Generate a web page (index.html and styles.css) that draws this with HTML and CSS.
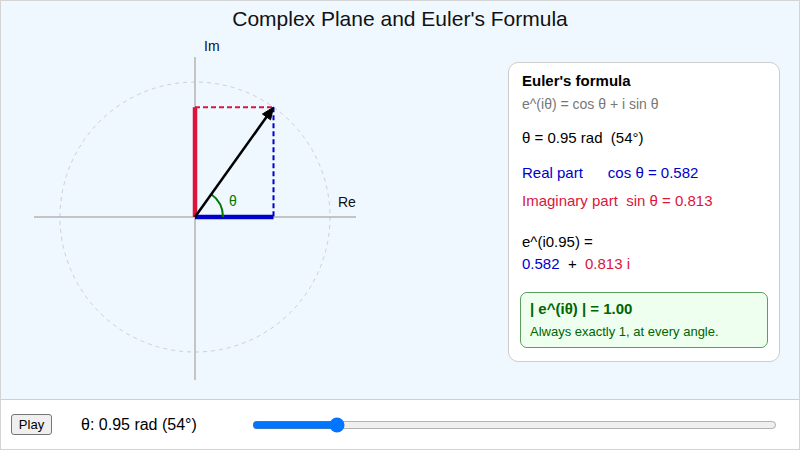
FILE: index.html
```html
<!DOCTYPE html>
<html lang="en">
<head>
<meta charset="utf-8">
<title>Complex Plane and Euler's Formula</title>
<link rel="stylesheet" href="styles.css">
</head>
<body>
<div class="app">
  <div class="stage">
    <h1 class="title">Complex Plane and Euler's Formula</h1>
    <div class="content">
      <svg class="plane" width="400" height="362" viewBox="0 0 400 362">
        <circle cx="194" cy="180" r="135" fill="none" stroke="#cfcfcf" stroke-width="1" stroke-dasharray="4 4"/>
        <line x1="33" y1="180" x2="355" y2="180" stroke="#b3b3b3" stroke-width="1.5"/>
        <line x1="194" y1="20" x2="194" y2="343" stroke="#b3b3b3" stroke-width="1.5"/>
        <text x="203" y="10" class="axis-label" dominant-baseline="middle">Im</text>
        <text x="337" y="166" class="axis-label" dominant-baseline="middle">Re</text>
        <line x1="194" y1="70.2" x2="272.5" y2="70.2" stroke="#dc143c" stroke-width="2" stroke-dasharray="5 3"/>
        <line x1="272.5" y1="70.2" x2="272.5" y2="180" stroke="#0000cc" stroke-width="2" stroke-dasharray="5 3"/>
        <line x1="194" y1="180" x2="194" y2="70.2" stroke="#dc143c" stroke-width="4.5"/>
        <line x1="194" y1="180" x2="272.5" y2="180" stroke="#0000cc" stroke-width="4.5"/>
        <path d="M222,180 A28,28 0 0 0 210.29,157.22" fill="none" stroke="#007700" stroke-width="2"/>
        <text x="232" y="165" class="theta-label" text-anchor="middle" dominant-baseline="middle">θ</text>
        <line x1="194" y1="180" x2="266" y2="79.3" stroke="#000" stroke-width="2.5"/>
        <polygon points="272.5,70.2 269.57,82.87 261.43,77.05" fill="#000" stroke="#000" stroke-width="1" stroke-linejoin="round"/>
      </svg>
      <div class="panel">
        <div class="p-title">Euler's formula</div>
        <div class="p-formula">e^(iθ) = cos θ + i sin θ</div>
        <div class="p-theta">θ = 0.95 rad  (54°)</div>
        <div class="p-real">Real part      cos θ = 0.582</div>
        <div class="p-imag">Imaginary part  sin θ = 0.813</div>
        <div class="p-expr">e^(i0.95) =</div>
        <div class="p-value"><span class="blue">0.582</span>  +  <span class="red">0.813 i</span></div>
        <div class="modulus">
          <div class="m-title">| e^(iθ) | = 1.00</div>
          <div class="m-note">Always exactly 1, at every angle.</div>
        </div>
      </div>
    </div>
  </div>
  <div class="controls">
    <button class="play" type="button">Play</button>
    <span class="readout">θ: 0.95 rad (54°)</span>
    <input class="slider" type="range" min="0" max="6.2832" step="0.01" value="0.95">
  </div>
</div>
</body>
</html>
```

FILE: styles.css
```css
* { box-sizing: border-box; }
html, body { margin: 0; padding: 0; }
body {
  font-family: "Liberation Sans", Arial, Helvetica, sans-serif;
  background: #ffffff;
  color: #000;
}
.app {
  width: 800px;
  height: 450px;
  border: 1px solid #d4d4d4;
  display: flex;
  flex-direction: column;
}
.stage {
  height: 398px;
  background: #f0f8ff;
  display: flex;
  flex-direction: column;
}
.title {
  margin: 0;
  height: 36px;
  line-height: 36px;
  font-size: 21px;
  font-weight: normal;
  text-align: center;
  color: #111;
}
.content {
  flex: 1;
  display: flex;
  justify-content: space-between;
  padding-right: 19px;
}
.plane { display: block; }
.axis-label { font-family: "Liberation Sans", Arial, sans-serif; font-size: 14px; fill: #111; }
.theta-label { font-family: "Liberation Sans", Arial, sans-serif; font-size: 14px; fill: #007700; }
.panel {
  margin-top: 25px;
  width: 272px;
  align-self: flex-start;
  background: #fff;
  border: 1px solid #cccccc;
  border-radius: 10px;
  padding: 8px 11px 13px 13px;
  font-size: 15px;
  line-height: 20px;
}
.panel > div { white-space: pre; }
.p-title { font-weight: bold; }
.p-formula { margin-top: 3px; font-size: 14px; color: #777; }
.p-theta { margin-top: 14px; }
.p-real { margin-top: 15px; color: #0000cc; }
.p-imag { margin-top: 8px; color: #dc143c; }
.p-expr { margin-top: 21px; }
.p-value { margin-top: 2px; }
.blue { color: #0000cc; }
.red { color: #dc143c; }
.panel > .modulus {
  white-space: normal;
  margin-top: 18px;
  margin-left: -2px;
  background: #efffef;
  border: 1px solid #5c9e5c;
  border-radius: 7px;
  padding: 6px 9px 5px 9px;
  color: #006400;
}
.m-title { font-weight: bold; font-size: 15px; }
.m-note { margin-top: 3px; font-size: 13px; }
.controls {
  flex: 1;
  background: #fff;
  border-top: 1px solid #cfcfcf;
  display: flex;
  align-items: center;
  padding-left: 10px;
  padding-right: 22px;
}
.play {
  font-family: "Liberation Sans", Arial, sans-serif;
  font-size: 13px;
  width: 41px;
  height: 21px;
  padding: 0;
  border: 1px solid #767676;
  border-radius: 3px;
  background: #efefef;
  color: #000;
  margin-right: 29px;
}
.readout {
  font-size: 16px;
  width: 171px;
}
.slider {
  flex: 1;
  margin: 0;
  accent-color: #0075ff;
}
```
